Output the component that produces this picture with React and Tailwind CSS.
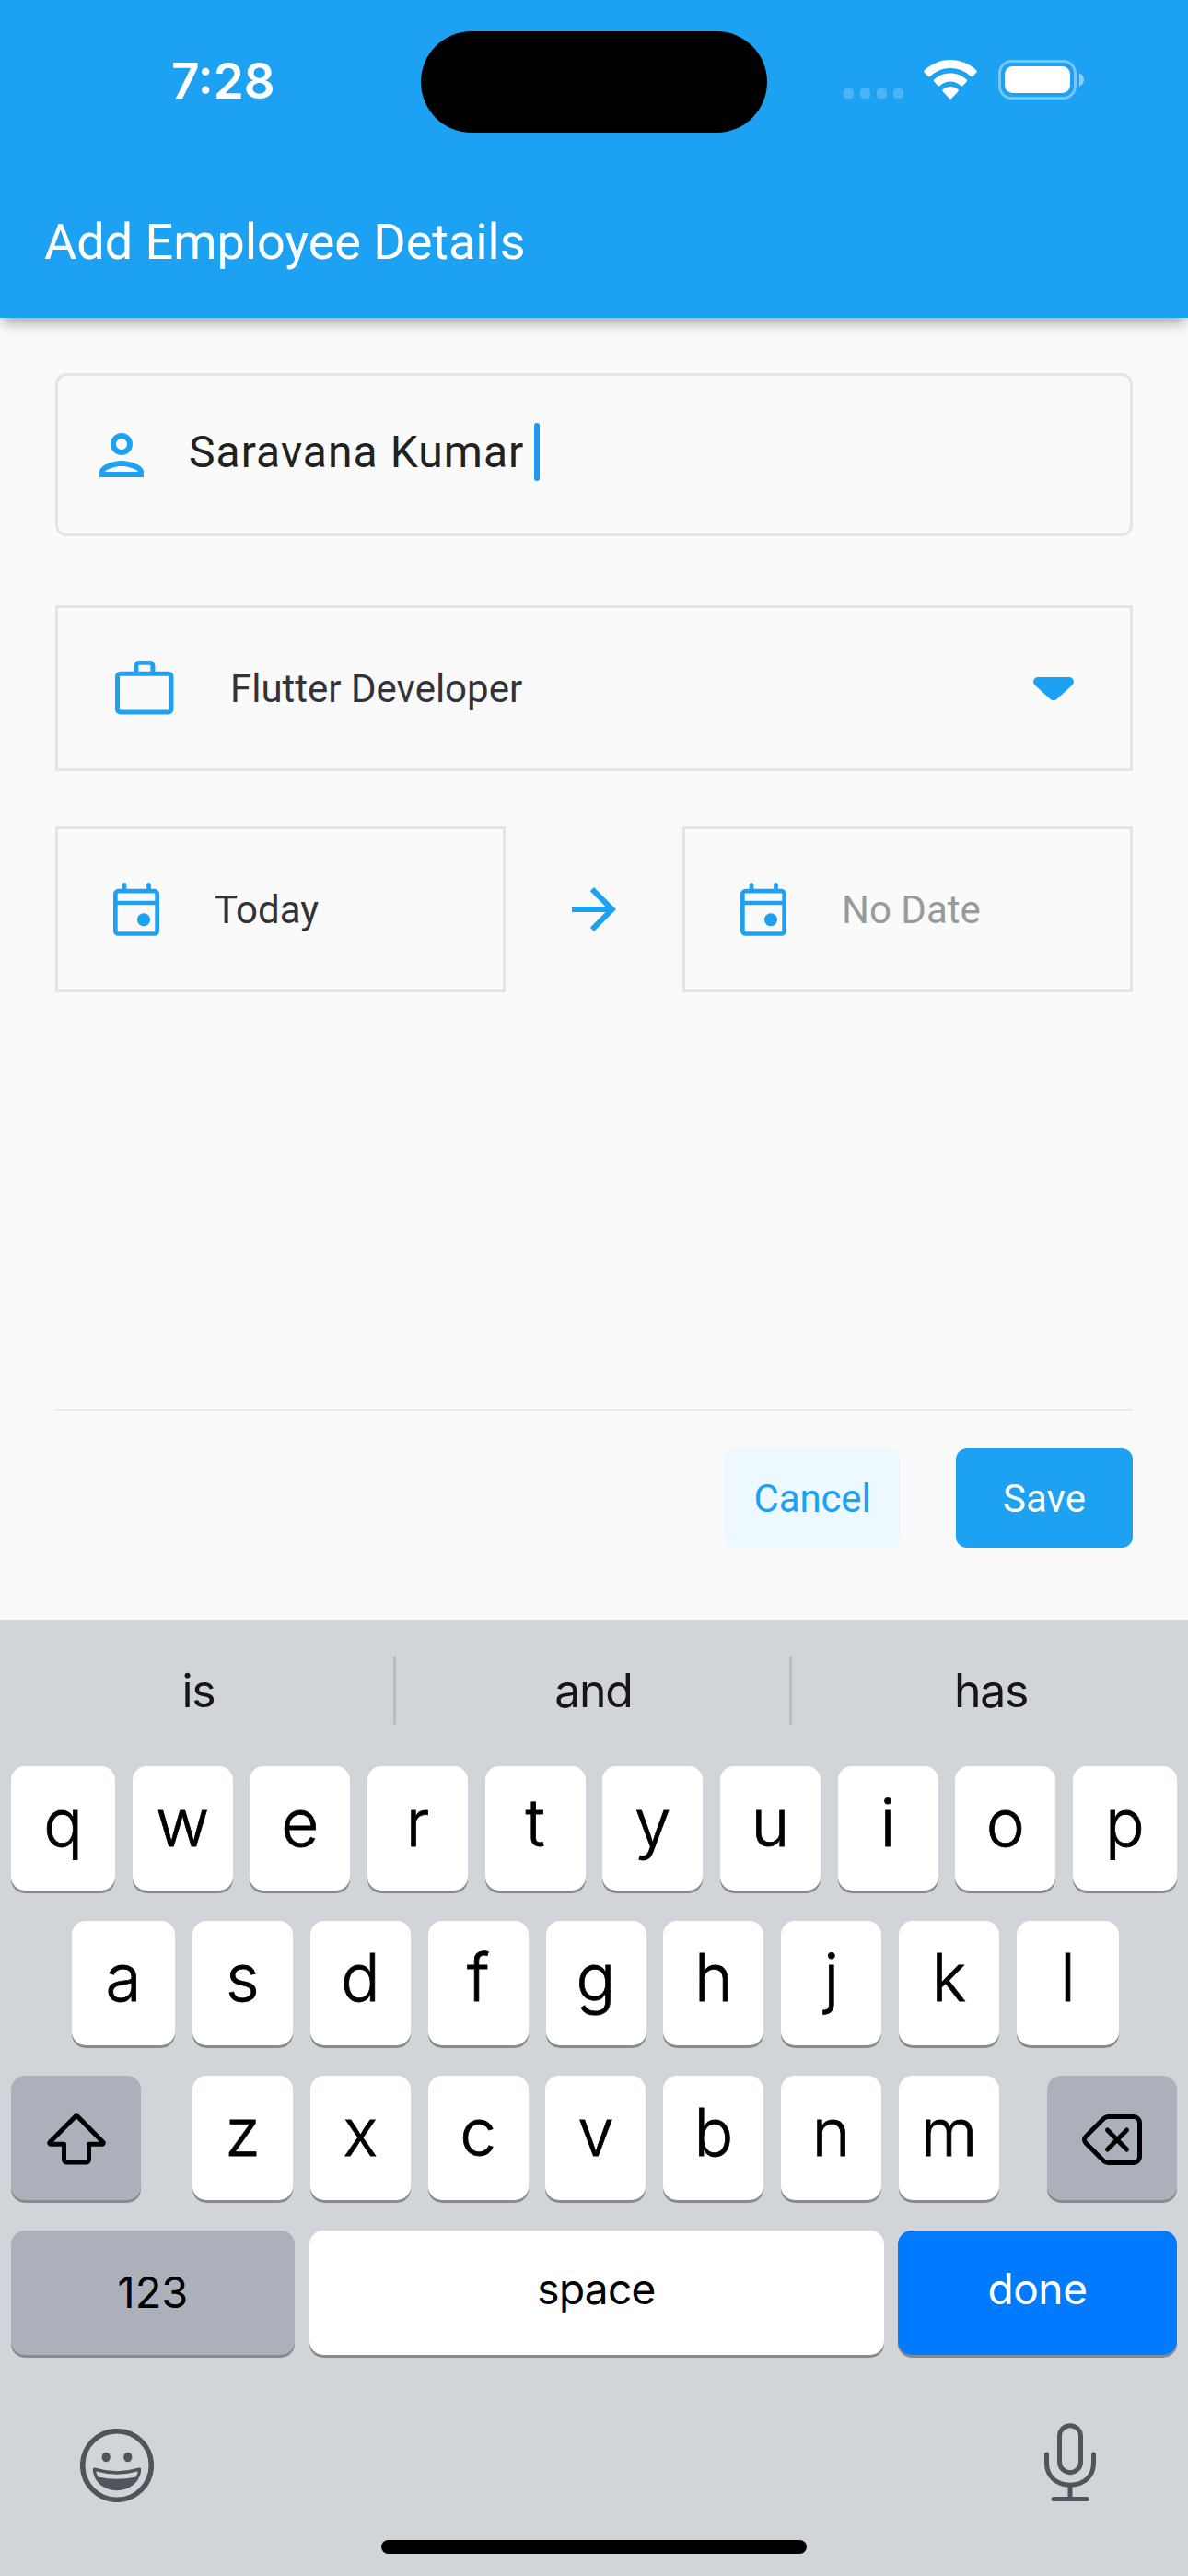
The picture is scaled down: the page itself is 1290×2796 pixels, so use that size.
import React from "react";

function WifiIcon() {
  return (
    <svg width="58" height="43" viewBox="0 0 58 43" fill="white">
      <path d="M29 0C39.8 0 49.7 4.2 57.2 11.2c.7.7.7 1.8 0 2.5l-3.9 4c-.7.7-1.7.7-2.4 0A31.6 31.6 0 0 0 29 8.9c-8.500 0-16.200 3.300-21.900 8.800-.7.7-1.700.7-2.400 0l-3.900-4c-.7-.7-.7-1.800 0-2.500C8.300 4.200 18.200 0 29 0z" />
      <path d="M29 14.500c6.700 0 12.800 2.500 17.500 6.700.8.7.8 1.800.1 2.500l-4 4.200c-.7.7-1.700.7-2.400.1A16.900 16.900 0 0 0 29 23.600c-4.300 0-8.200 1.600-11.200 4.400-.7.6-1.700.6-2.400-.1l-4-4.200c-.7-.7-.7-1.800.1-2.500A26 26 0 0 1 29 14.500z" />
      <path d="M29 29c3.100 0 6 1.100 8.200 3 .7.6.7 1.700.1 2.400l-7 7.400c-.7.8-1.800.8-2.500 0l-7-7.400c-.7-.7-.6-1.800.1-2.400A12.600 12.600 0 0 1 29 29z" />
    </svg>
  );
}

function BatteryIcon() {
  return (
    <svg width="94" height="43" viewBox="0 0 94 43" fill="white">
      <rect x="1.500" y="1.500" width="82" height="40" rx="13" fill="none" stroke="white" strokeOpacity="0.4" strokeWidth="3" />
      <rect x="7" y="7" width="71" height="29" rx="8.500" />
      <path d="M88 14.500c3 1 5 3.700 5 7s-2 6-5 7z" fillOpacity="0.5" />
    </svg>
  );
}

function PersonIcon() {
  return (
    <svg width="72" height="72" viewBox="0 0 24 24" fill="#1da1f2">
      <path d="M12 6c1.100 0 2 .9 2 2s-.9 2-2 2-2-.9-2-2 .9-2 2-2m0 10c2.700 0 5.800 1.290 6 2H6c.23-.72 3.310-2 6-2m0-12C9.790 4 8 5.790 8 8s1.790 4 4 4 4-1.790 4-4-1.790-4-4-4zm0 10c-2.670 0-8 1.340-8 4v2h16v-2c0-2.660-5.330-4-8-4z" />
    </svg>
  );
}

function BriefcaseIcon() {
  return (
    <svg width="64" height="60" viewBox="0 0 64 60" fill="none" stroke="#1da1f2" strokeWidth="5">
      <rect x="2.500" y="14.200" width="58.500" height="41.800" rx="3.200" />
      <path d="M22.900 14V5.800a3.500 3.500 0 0 1 3.500-3.500h11a3.500 3.500 0 0 1 3.500 3.500V14" />
    </svg>
  );
}

function CalendarIcon() {
  return (
    <svg width="50" height="58" viewBox="0 0 50 58" fill="none" stroke="#1da1f2" strokeWidth="4.700">
      <rect x="2.350" y="9.200" width="45.300" height="46.300" rx="3" />
      <path d="M2 22h46" />
      <path d="M12 8V2.400M38.500 8V2.400" strokeLinecap="round" />
      <circle cx="33" cy="40.300" r="7" fill="#1da1f2" stroke="none" />
    </svg>
  );
}

function ArrowIcon() {
  return (
    <svg width="72" height="72" viewBox="0 0 24 24" fill="#1da1f2">
      <path d="M12 4l-1.410 1.410L16.170 11H4v2h12.170l-5.580 5.590L12 20l8-8z" />
    </svg>
  );
}

function CaretIcon() {
  return (
    <svg width="44" height="25" viewBox="0 0 44 25" fill="#1da1f2">
      <path d="M5 0h34c4.500 0 6.500 5.200 3.400 8.400L26 23.400c-2.300 2.100-5.700 2.100-8 0L1.600 8.400C-1.500 5.200.5 0 5 0z" />
    </svg>
  );
}

function ShiftIcon() {
  return (
    <svg width="64" height="56" viewBox="0 0 64 56" fill="none" stroke="black" strokeWidth="5" strokeLinejoin="round">
      <path d="M30.600 3.400a2 2 0 0 1 2.800 0L60.700 31c1 1.100.5 2.200-.9 2.200H45.500V50a3 3 0 0 1-3 3h-21a3 3 0 0 1-3-3V33.200H4.200c-1.400 0-1.900-1.100-.9-2.200z" />
    </svg>
  );
}

function BackspaceIcon() {
  return (
    <svg width="66" height="55" viewBox="0 0 66 55" fill="none" stroke="black" strokeWidth="5" strokeLinecap="round" strokeLinejoin="round">
      <path d="M28.500 2.500H56a6.500 6.500 0 0 1 6.500 6.500v37a6.500 6.500 0 0 1-6.500 6.500H28.500a7 7 0 0 1-5-2L4 31a4.900 4.900 0 0 1 0-7L23.500 4.500a7 7 0 0 1 5-2z" />
      <path d="M27.500 17l21 21M48.500 17l-21 21" />
    </svg>
  );
}

function EmojiIcon() {
  return (
    <svg width="80" height="80" viewBox="0 0 80 80" fill="#50555c">
      <circle cx="40" cy="40" r="37.300" fill="none" stroke="#50555c" strokeWidth="5.600" />
      <ellipse cx="28.200" cy="31" rx="4.600" ry="5.200" />
      <ellipse cx="51.800" cy="31" rx="4.600" ry="5.200" />
      <path
        d="M16.200 42.600Q40 49.800 63.800 42.600C65.500 42.100 66.400 43 66.200 45 65 58 54 67.200 40 67.200S15 58 13.800 45C13.600 43 14.500 42.100 16.200 42.600ZM17.300 46.600Q17.800 50 19.400 52.400Q40 57.200 60.600 52.400Q62.200 50 62.700 46.600Q40 52.800 17.300 46.600Z"
        fillRule="evenodd"
      />
    </svg>
  );
}

function MicIcon() {
  return (
    <svg width="56" height="86" viewBox="0 0 56 86" fill="none" stroke="#50555c" strokeWidth="5" strokeLinecap="round">
      <rect x="16.500" y="2.700" width="23" height="51" rx="11.500" />
      <path d="M2.500 34v9c0 14.500 10 24.200 25.500 24.200S53.500 57.500 53.500 43v-9" />
      <path d="M28 67.500V82.500M10 82.500h36" />
    </svg>
  );
}

function Key({ className = "w-[109px]", children }) {
  return (
    <div
      className={
        "flex h-[135px] shrink-0 items-center justify-center rounded-[15px] shadow-[0_3px_0_#898a8d] " + className
      }
    >
      {children}
    </div>
  );
}

function Letter({ char, className = "w-[109px]" }) {
  return (
    <Key
      className={
        "bg-white pb-[13px] text-[71px] leading-none font-light text-black [-webkit-text-stroke:0.8px_black] " +
        className
      }
    >
      {char}
    </Key>
  );
}

function StatusBar() {
  return (
    <div className="flex h-[180px] items-start">
      <div className="mt-[62px] w-[457px] pl-[186px] font-['Inter'] text-[53px] leading-[53px] font-semibold text-white">
        7:28
      </div>
      <div className="mt-[34px] h-[110px] w-[376px] rounded-full bg-black" />
      <div className="ml-[83px] flex items-end pt-[65px]">
        <div className="mb-px flex gap-[7px] opacity-20">
          <div className="size-[11px] rounded-[4px] bg-white" />
          <div className="size-[11px] rounded-[4px] bg-white" />
          <div className="size-[11px] rounded-[4px] bg-white" />
          <div className="size-[11px] rounded-[4px] bg-white" />
        </div>
        <div className="ml-[22px]">
          <WifiIcon />
        </div>
        <div className="ml-[23px]">
          <BatteryIcon />
        </div>
      </div>
    </div>
  );
}

function DateField({ label, className }) {
  return (
    <div className="flex h-[180px] w-[489px] items-center border-3 border-[#e4e4e4] pl-[60px]">
      <CalendarIcon />
      <span className={"ml-[60px] pt-[2px] text-[42px] leading-none " + className}>{label}</span>
    </div>
  );
}

function Keyboard() {
  return (
    <div className="flex h-[1038px] flex-col bg-[#d1d4d9] font-['Inter']">
      <div className="flex h-[153px] items-center text-[50px] leading-none tracking-[-1.300px] text-[#161616]">
        <div className="w-[427px] pl-[4px] text-center">is</div>
        <div className="h-[75px] w-[3px] rounded-full bg-[#babdc2]" />
        <div className="w-[427px] pl-[2px] text-center">and</div>
        <div className="h-[75px] w-[3px] rounded-full bg-[#babdc2]" />
        <div className="w-[430px] pl-[2px] text-center">has</div>
      </div>

      <div className="mt-[6px] flex justify-between px-[12px]">
        <Letter char="q" className="w-[113px]" />
        {"wertyuio".split("").map((c) => (
          <Letter key={c} char={c} />
        ))}
        <Letter char="p" className="w-[113px]" />
      </div>

      <div className="mt-[33px] flex justify-between pr-[75px] pl-[78px]">
        <Letter char="a" className="w-[112px]" />
        {"sdfghjk".split("").map((c) => (
          <Letter key={c} char={c} />
        ))}
        <Letter char="l" className="w-[111px]" />
      </div>

      <div className="mt-[33px] flex justify-between px-[12px]">
        <Key className="w-[141px] bg-[#abb0ba] pt-[2px]">
          <ShiftIcon />
        </Key>
        <div className="ml-[4px] flex w-[876px] justify-between">
          {"zxcvbnm".split("").map((c) => (
            <Letter key={c} char={c} />
          ))}
        </div>
        <Key className="w-[141px] bg-[#abb0ba] pt-[3px]">
          <BackspaceIcon />
        </Key>
      </div>

      <div className="mt-[33px] flex justify-between px-[12px] text-[46px] leading-none">
        <Key className="w-[308px] bg-[#abb0ba] pb-[2px] text-[47px] text-black">123</Key>
        <Key className="w-[624px] bg-white pb-[10px] tracking-[-0.700px] text-black">space</Key>
        <Key className="w-[303px] bg-[#007aff] pb-[10px] tracking-[-0.400px] text-white">done</Key>
      </div>

      <div className="mt-[74px] flex items-end justify-between pr-[100px] pl-[87px]">
        <EmojiIcon />
        <MicIcon />
      </div>

      <div className="mt-[41px] h-[15px] w-[462px] self-center rounded-full bg-black" />
    </div>
  );
}

export default function App() {
  return (
    <div className="flex h-[2796px] w-[1290px] flex-col overflow-hidden bg-[#fafafa] font-['Roboto']">
      <header className="h-[345px] shrink-0 bg-[#1da1f2] shadow-[0_6px_12px_-3px_rgba(0,0,0,0.2),0_9px_15px_-2px_rgba(0,0,0,0.18)]">
        <StatusBar />
        <h1 className="flex h-[165px] items-center pl-[48px] text-[54px] leading-none text-white">
          Add Employee Details
        </h1>
      </header>

      <main className="flex h-[1413px] shrink-0 flex-col px-[60px] pt-[60px]">
        <div className="flex h-[177px] items-center rounded-[12px] border-3 border-[#e4e4e4] pl-[33px]">
          <PersonIcon />
          <span className="ml-[37px] pb-[5px] text-[48px] leading-none tracking-[1.050px] text-[#212121]">
            Saravana Kumar
          </span>
          <div className="mb-[6px] ml-[11px] h-[63px] w-[6px] rounded-full bg-[#2196f3]" />
        </div>

        <div className="mt-[75px] flex h-[180px] items-center border-3 border-[#e4e4e4] pr-[61px] pl-[62px]">
          <BriefcaseIcon />
          <span className="ml-[61px] grow pt-[2px] text-[42px] leading-none text-[#323238]">Flutter Developer</span>
          <CaretIcon />
        </div>

        <div className="mt-[60px] flex items-center justify-between">
          <DateField label="Today" className="text-[#323238]" />
          <ArrowIcon />
          <DateField label="No Date" className="text-[#949c9e]" />
        </div>

        <div className="mt-[452px] h-[2px] bg-[#ebebeb]" />

        <div className="mt-[41px] flex justify-end gap-[60px] text-[42px] leading-none">
          <button className="h-[108px] w-[192px] rounded-[12px] bg-[#edf8ff] pt-[2px] tracking-[-0.150px] text-[#1da1f2]">
            Cancel
          </button>
          <button className="h-[108px] w-[192px] rounded-[12px] bg-[#1da1f2] pt-[2px] text-white">Save</button>
        </div>
      </main>

      <Keyboard />
    </div>
  );
}
